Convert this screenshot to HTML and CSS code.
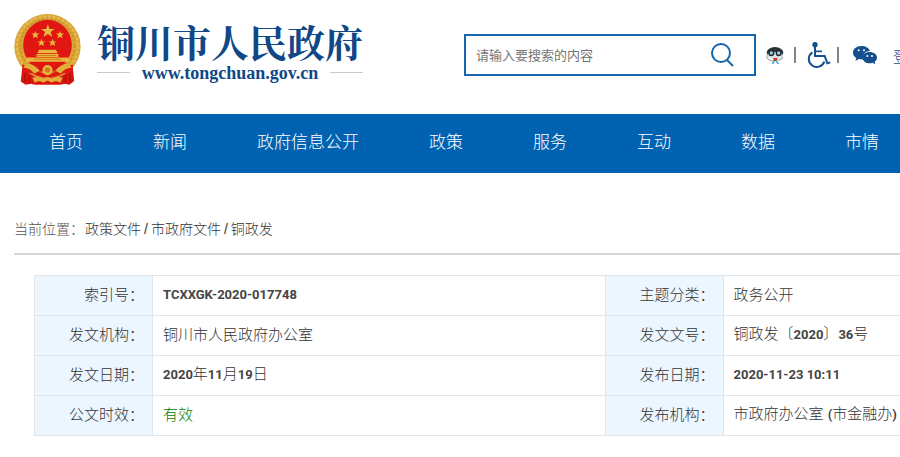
FILE: index.html
```html
<!DOCTYPE html>
<html lang="zh-CN">
<head>
  <meta charset="UTF-8">
  <meta name="viewport" content="width=device-width">
  <title>铜川市人民政府</title>
  <link rel="stylesheet" href="styles.css">
</head>
<body>
  <div class="page">
    <header class="header">
      <a class="logo" href="#">
        <svg class="emblem" viewBox="0 0 198 210" aria-hidden="true">
          <path d="M26 140 L20 200 L34 209 L50 206 L62 209 L138 209 L150 206 L164 209 L178 198 L172 140Z" fill="#d9150f"/>
          <ellipse cx="99" cy="96" rx="98" ry="96" fill="#d9a536"/>
          <ellipse cx="99" cy="95" rx="90" ry="88" fill="none" stroke="#e6bb50" stroke-width="7" stroke-dasharray="9 5"/>
          <ellipse cx="99" cy="95" rx="80" ry="80" fill="none" stroke="#bd7d22" stroke-width="3" stroke-dasharray="5 7"/>
          <ellipse cx="99" cy="92" rx="72" ry="75" fill="#df1612"/>
          <g fill="#e9b83c">
            <path d="M100 30 l5 14 15 0 -12 9 5 15 -13 -9 -13 9 5 -15 -12 -9 15 0z"/>
            <path id="star" d="M63 50 l3 8 9 0 -7 5 3 9 -8 -5 -8 5 3 -9 -7 -5 9 0z"/>
            <use href="#star" x="73"/>
            <use href="#star" x="18" y="23"/>
            <use href="#star" x="51" y="23"/>
            <path d="M74 106 h50 l5 10 h-60z M67 118 h64 v9 h-64z M38 129 h122 l6 12 H32z"/>
          </g>
          <path d="M38 146 h122 l-14 24 H52z" fill="#df1612"/>
          <path d="M60 134 h80 M60 123 h66" stroke="#b5651b" stroke-width="2"/>
          <path d="M24 150 q30 0 45 17 q30 20 61 0 q15 -17 45 -17 l-4 26 q-22 -4 -38 6 q-34 14 -67 0 q-16 -10 -38 -6z" fill="#e01a10"/>
          <path d="M36 145 q27 5 40 23 l-16 8 q-12 -16 -32 -18z M162 145 q-27 5 -40 23 l16 8 q12 -16 32 -18z" fill="#e3b03c"/>
          <circle cx="99" cy="166" r="15" fill="#e7b73f"/>
          <circle cx="99" cy="166" r="8" fill="#cb7d20"/>
          <path d="M54 188 q20 -5 31 3 l14 -5 14 5 q11 -8 31 -3 l-7 15 q-15 -8 -25 0 l-13 -6 -13 6 q-10 -8 -25 0z" fill="#e3ae39"/>
          <path d="M46 180 v26 M152 180 v26 M32 174 v28 M166 174 v28" stroke="#a80c0c" stroke-width="3"/>
        </svg>
        <span class="logo-text">
          <span class="logo-name">铜川市人民政府</span>
          <span class="logo-url">www.tongchuan.gov.cn</span>
        </span>
      </a>

      <form class="search">
        <input type="text" name="keyword" placeholder="请输入要搜索的内容" aria-label="搜索">
        <button type="submit" aria-label="搜索">
          <svg viewBox="0 0 24 24" width="24" height="24" fill="none" stroke="#1565ad" stroke-width="2">
            <circle cx="11" cy="10" r="9"/>
            <path d="M17 17 L23 23"/>
          </svg>
        </button>
      </form>

      <div class="tools">
        <a href="#" aria-label="智能问答">
          <svg viewBox="0 0 57 57" width="19" height="19">
            <path d="M4 29 Q8 46 27 44 M53 32 Q50 41 38 43" fill="none" stroke="#a9b0b7" stroke-width="4"/>
            <ellipse cx="30" cy="20" rx="25" ry="17" fill="#2b3138"/>
            <path d="M7 23 q23 -10 46 0 q-4 16 -23 17 q-19 -1 -23 -17z" fill="#dfe5e9"/>
            <circle cx="19" cy="22" r="9" fill="#20262c"/>
            <circle cx="41" cy="22" r="9" fill="#20262c"/>
            <circle cx="19" cy="21" r="5" fill="#8fd5ed"/>
            <circle cx="41" cy="21" r="5" fill="#8fd5ed"/>
            <path d="M24 36 h14 l-3 9 h-8z" fill="#c0392b"/>
            <path d="M28 45 l-6 9 M34 45 l6 9" stroke="#42b2e0" stroke-width="5"/>
          </svg>
        </a>
        <span class="bar"></span>
        <a href="#" aria-label="无障碍">
          <svg viewBox="0 0 75 78" width="25" height="26" fill="none" stroke="#164f8e" stroke-width="6">
            <circle cx="27" cy="8" r="8" fill="#164f8e" stroke="none"/>
            <path d="M27 14 V42 H56 L64 64 L73 61"/>
            <path d="M28 28 H48" stroke-width="5"/>
            <path d="M19 31 A24 24 0 1 0 55 59"/>
          </svg>
        </a>
        <span class="bar"></span>
        <a class="wechat" href="#" aria-label="微信">
          <svg viewBox="0 0 72 60" width="24" height="20">
            <path d="M25 3 C10 3 0 12 0 23 c0 7 4 12 10 16 l-3 9 11 -6 q6 2 13 1 C28 28 38 18 51 18 C48 9 38 3 25 3z" fill="#164f8e"/>
            <path d="M50 21 c-12 0 -21 7 -21 17 s9 17 21 17 q5 0 8 -2 l9 5 -2 -8 c4 -3 7 -7 7 -12 0 -10 -10 -17 -22 -17z" fill="#164f8e"/>
            <g fill="#fff">
              <circle cx="17" cy="16" r="3"/>
              <circle cx="33" cy="16" r="3"/>
              <circle cx="43" cy="33" r="3"/>
              <circle cx="57" cy="33" r="3"/>
            </g>
          </svg>
        </a>
        <a class="login" href="#">登录</a>
      </div>
    </header>

    <nav class="nav">
      <a href="#">首页</a>
      <a href="#">新闻</a>
      <a href="#">政府信息公开</a>
      <a href="#">政策</a>
      <a href="#">服务</a>
      <a href="#">互动</a>
      <a href="#">数据</a>
      <a href="#">市情</a>
    </nav>

    <main class="content">
      <div class="crumbs">
        <span class="crumbs-label">当前位置：</span>
        <a href="#">政策文件</a>
        <span>/</span>
        <a href="#">市政府文件</a>
        <span>/</span>
        <a href="#">铜政发</a>
      </div>

      <table class="info">
        <tr>
          <th scope="row">索引号：</th>
          <td><b>TCXXGK-2020-017748</b></td>
          <th scope="row">主题分类：</th>
          <td>政务公开</td>
        </tr>
        <tr>
          <th scope="row">发文机构：</th>
          <td>铜川市人民政府办公室</td>
          <th scope="row">发文文号：</th>
          <td>铜政发〔<b>2020</b>〕<b>36</b>号</td>
        </tr>
        <tr>
          <th scope="row">发文日期：</th>
          <td><b>2020</b>年<b>11</b>月<b>19</b>日</td>
          <th scope="row">发布日期：</th>
          <td><b>2020-11-23 10:11</b></td>
        </tr>
        <tr>
          <th scope="row">公文时效：</th>
          <td class="valid">有效</td>
          <th scope="row">发布机构：</th>
          <td>市政府办公室 <b>(</b>市金融办<b>)</b></td>
        </tr>
      </table>
    </main>
  </div>
</body>
</html>
```
FILE: styles.css
```css
* {
  box-sizing: border-box;
}

html {
  overflow-x: hidden;
}

body {
  margin: 0;
  overflow-x: hidden;
  background-color: #fff;
  color: #333;
  font-family: "Liberation Sans", "Noto Sans CJK SC", sans-serif;
  font-size: 15px;
  font-weight: 300;
}

a {
  color: inherit;
  text-decoration: none;
}

svg {
  display: block;
}

.page {
  min-width: 1190px;
}

/* header */
.header {
  display: flex;
  align-items: center;
  height: 114px;
  padding: 0 14px 4px;
}

.logo {
  display: flex;
  align-items: center;
  gap: 16px;
  width: 450px;
  margin-bottom: 11px;
  color: #0f4787;
}

.emblem {
  width: 67px;
  height: 71px;
}

.logo-text {
  display: flex;
  flex-direction: column;
}

.logo-name {
  font-family: "Noto Serif CJK SC", "Noto Sans CJK SC", serif;
  font-size: 38px;
  font-weight: 700;
  line-height: 46px;
}

.logo-url {
  display: flex;
  align-items: center;
  justify-content: space-between;
  font-family: "Liberation Serif", serif;
  font-size: 18px;
  font-weight: 700;
  line-height: 18px;
}

.logo-url::before,
.logo-url::after {
  content: "";
  width: 33px;
  height: 1px;
  background-color: #c4ccd4;
}

.search {
  display: flex;
  width: 292px;
  height: 42px;
  border: 2px solid #1767b0;
}

.search input {
  flex: 1;
  min-width: 0;
  padding: 0 10px;
  border: 0;
  background: none;
  font: inherit;
  font-size: 13px;
  font-weight: 400;
  outline: none;
}

.search input::placeholder {
  color: #757575;
}

.search button {
  padding: 0 20px;
  border: 0;
  background: none;
  cursor: pointer;
}

.tools {
  display: flex;
  align-items: center;
  gap: 10px;
  margin-left: 9px;
  color: #164f8e;
}

.bar {
  width: 2px;
  height: 16px;
  background-color: #858585;
}

.bar:nth-of-type(2) {
  margin-left: -4px;
}

.wechat {
  margin-left: 4px;
}

.login {
  margin-left: 6px;
}

/* main menu */
.nav {
  display: flex;
  gap: 70px;
  height: 59px;
  padding-left: 49px;
  background-color: #0062b1;
  color: #fff;
  font-size: 17px;
  line-height: 58px;
}

/* breadcrumb */
.content {
  padding: 42px 14px 20px;
}

.crumbs {
  display: flex;
  gap: 3px;
  padding-bottom: 10px;
  border-bottom: 2px solid #d3d7d7;
  font-size: 14px;
  line-height: 28px;
}

.crumbs-label {
  width: 68px;
  color: #555;
  white-space: nowrap;
}

/* document info */
.info {
  width: calc(100% - 20px);
  margin: 20px 0 0 20px;
  border-collapse: collapse;
  table-layout: fixed;
}

.info th,
.info td {
  height: 40px;
  padding: 0 10px 2px;
  border: 1px solid #e3e6e9;
  line-height: 24px;
}

.info th {
  width: 118px;
  padding-right: 8px;
  background-color: #ebf6ff;
  font-weight: 300;
  text-align: right;
  white-space: nowrap;
}

.info b {
  color: #444;
  font-family: Roboto, "Liberation Sans", sans-serif;
  font-size: 13px;
  font-weight: 700;
}

.info .valid {
  color: #008000;
}
```
